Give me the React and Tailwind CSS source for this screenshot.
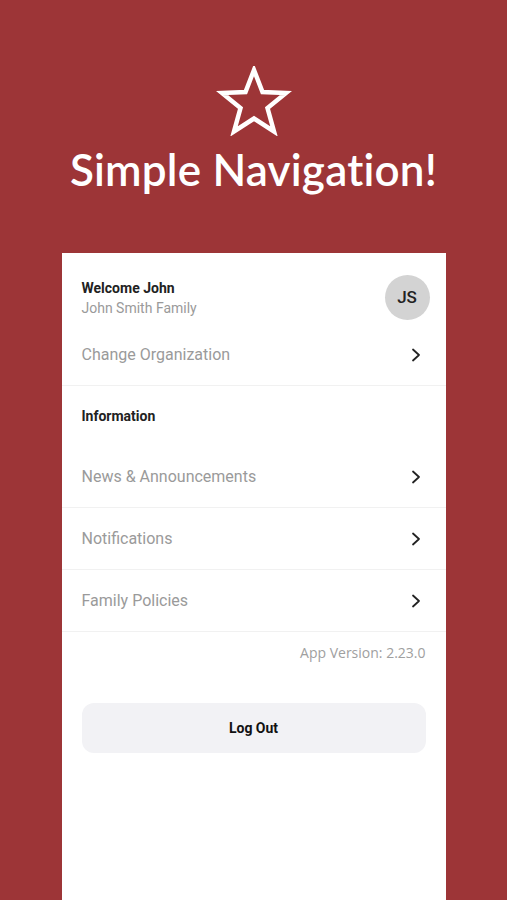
import React from "react";

function Chevron() {
  return (
    <svg width="12" height="16" viewBox="0 0 12 16" fill="none" className="shrink-0">
      <path d="M3 2.5 L9 8 L3 13.5" stroke="#222" strokeWidth="1.8" strokeLinecap="round" strokeLinejoin="round" />
    </svg>
  );
}

function Row({ label }) {
  return (
    <div className="flex items-center justify-between h-[62px] pl-5 pr-6 border-b border-[#f1f1f1]">
      <span className="text-[16px] text-[#9a9a9a]">{label}</span>
      <Chevron />
    </div>
  );
}

export default function App() {
  return (
    <div className="w-[507px] h-[900px] bg-[#9d3537] flex flex-col items-center overflow-hidden" style={{ fontFamily: "Roboto, 'Noto Sans', sans-serif" }}>
      <div className="mt-[66px]">
        <svg width="76" height="70" viewBox="0 0 76 70">
          <polygon
            points="38,4 46.5,26 70,27 51.5,42 58,65.5 38,52.5 18,65.5 24.5,42 6,27 29.5,26"
            fill="none"
            stroke="white"
            strokeWidth="4.5"
            strokeLinejoin="miter"
          />
        </svg>
      </div>
      <h1 className="mt-[8px] text-white text-[44px] leading-[50px] font-semibold tracking-[0.2px]" style={{ fontFamily: "Lato, 'Open Sans', sans-serif" }}>
        Simple Navigation!
      </h1>
      <div className="mt-[59px] w-[384px] flex-1 bg-white flex flex-col">
        <div className="flex items-center justify-between pl-5 pr-4 pt-[22px]">
          <div className="flex flex-col">
            <span className="text-[14px] leading-[20px] font-bold text-[#222]">Welcome John</span>
            <span className="text-[14px] leading-[20px] text-[#9a9a9a]">John Smith Family</span>
          </div>
          <div className="w-[45px] h-[45px] rounded-full bg-[#d3d3d3] flex items-center justify-center text-[17px] font-medium text-[#222]">
            JS
          </div>
        </div>
        <div className="flex items-center justify-between h-[62px] pl-5 pr-6 border-b border-[#f1f1f1] mt-[4px]">
          <span className="text-[16px] text-[#9a9a9a]">Change Organization</span>
          <Chevron />
        </div>
        <div className="pl-5 h-[60px] flex items-center">
          <span className="text-[14px] font-bold text-[#222]">Information</span>
        </div>
        <Row label="News & Announcements" />
        <Row label="Notifications" />
        <Row label="Family Policies" />
        <div className="flex justify-end pr-5 pt-[10px]">
          <span className="text-[14px] text-[#a0a0a0]" style={{ fontFamily: "'Open Sans', sans-serif" }}>App Version: 2.23.0</span>
        </div>
        <div className="mx-5 mt-[40px] h-[50px] rounded-[12px] bg-[#f2f2f5] flex items-center justify-center">
          <span className="text-[14px] font-bold text-[#111]">Log Out</span>
        </div>
      </div>
    </div>
  );
}
